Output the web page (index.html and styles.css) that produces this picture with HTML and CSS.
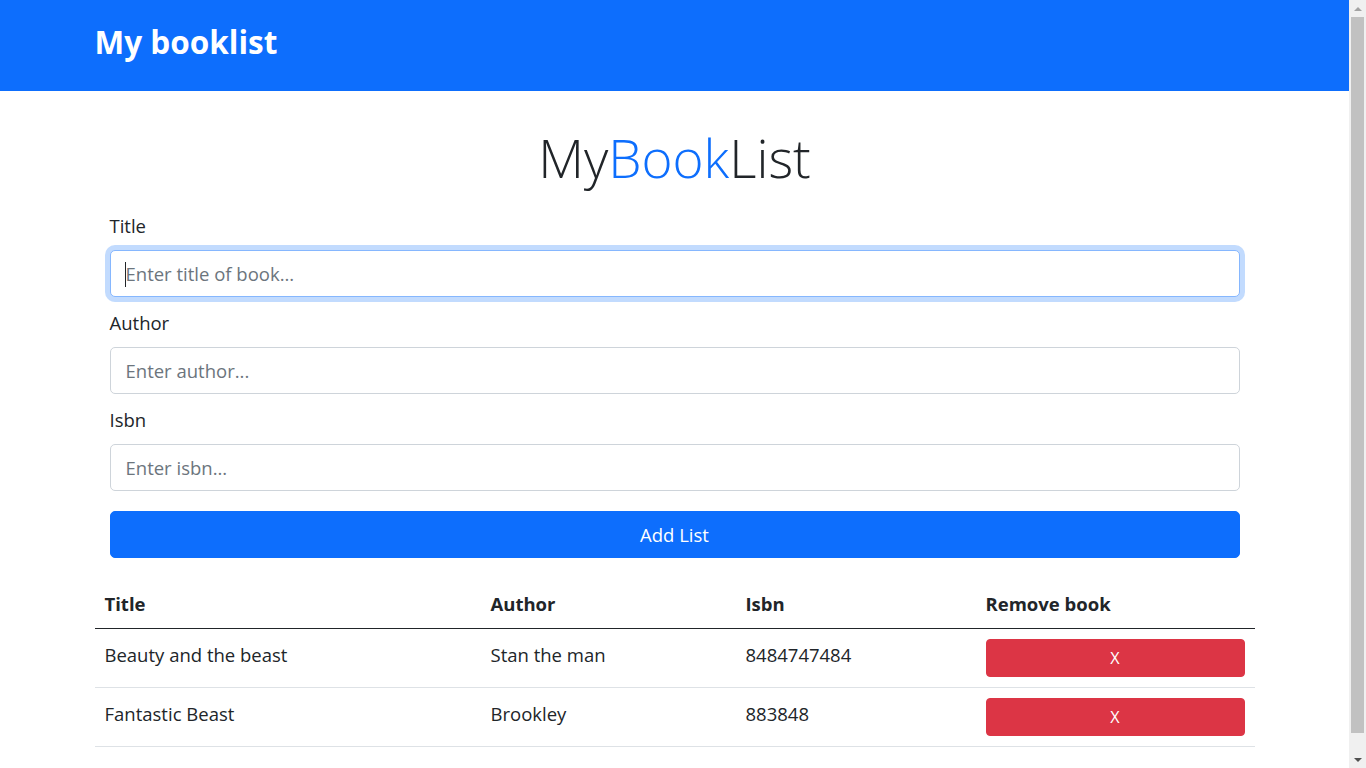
FILE: index.html
```html
<!DOCTYPE html>
<html lang="en">
<head>
<meta charset="utf-8">
<title>My booklist</title>
<link rel="stylesheet" href="styles.css">
</head>
<body>
<nav class="navbar">
  <div class="container">
    <span class="brand">My booklist</span>
  </div>
</nav>
<main class="container">
  <h1 class="display"><span>My</span><span class="accent">Book</span><span>List</span></h1>
  <form class="book-form">
    <div class="field">
      <label for="title">Title</label>
      <div class="input-wrap">
        <input id="title" class="input focused" type="text" placeholder="Enter title of book...">
        <span class="caret"></span>
      </div>
    </div>
    <div class="field">
      <label for="author">Author</label>
      <input id="author" class="input" type="text" placeholder="Enter author...">
    </div>
    <div class="field">
      <label for="isbn">Isbn</label>
      <input id="isbn" class="input" type="text" placeholder="Enter isbn...">
    </div>
    <button type="button" class="btn btn-primary">Add List</button>
  </form>
  <table class="book-table">
    <colgroup>
      <col class="col-title">
      <col class="col-author">
      <col class="col-isbn">
      <col class="col-remove">
    </colgroup>
    <thead>
      <tr><th>Title</th><th>Author</th><th>Isbn</th><th>Remove book</th></tr>
    </thead>
    <tbody>
      <tr>
        <td>Beauty and the beast</td>
        <td>Stan the man</td>
        <td>8484747484</td>
        <td class="actions"><button type="button" class="btn btn-danger">X</button></td>
      </tr>
      <tr>
        <td>Fantastic Beast</td>
        <td>Brookley</td>
        <td>883848</td>
        <td class="actions"><button type="button" class="btn btn-danger">X</button></td>
      </tr>
    </tbody>
  </table>
</main>
<div class="scrollbar" aria-hidden="true">
  <div class="sb-btn"><span class="arrow-up"></span></div>
  <div class="sb-track"><div class="sb-thumb"></div></div>
  <div class="sb-btn"><span class="arrow-down"></span></div>
</div>
</body>
</html>
```

FILE: styles.css
```css
body {
  margin: 0 17px 0 0;
  font-family: "Open Sans", "Noto Sans", sans-serif;
  font-size: 18.5px;
  line-height: 30px;
  color: #212529;
  background: #fff;
}

.container {
  width: 1160px;
  margin: 0 auto;
}

.navbar {
  background: #0d6efd;
  height: 91px;
  display: flex;
  align-items: center;
}
.brand {
  display: block;
  color: #fff;
  font-weight: 700;
  font-size: 31.5px;
  line-height: 40px;
  margin-top: -8px;
}

.display {
  margin: 35px 0 21px;
  text-align: center;
  font-weight: 300;
  font-size: 53px;
  line-height: 64px;
  color: #212529;
}
.display .accent {
  color: #0d6efd;
}

.book-form {
  padding: 0 15px;
  display: flex;
  flex-direction: column;
  gap: 11px;
}
.field label {
  display: block;
  margin-bottom: 9px;
}
.input-wrap {
  position: relative;
}
.input {
  display: block;
  box-sizing: border-box;
  width: 100%;
  height: 47px;
  padding: 0 15px 1px;
  font-family: inherit;
  font-size: 18.5px;
  color: #212529;
  background: #fff;
  border: 1px solid #ced4da;
  border-radius: 5px;
  outline: none;
}
.input::placeholder {
  color: #6c757d;
}
.input.focused {
  border-color: #86b7fe;
  box-shadow: 0 0 0 5px rgba(13, 110, 253, 0.25);
}
.caret {
  position: absolute;
  left: 15px;
  top: 12px;
  width: 1px;
  height: 25px;
  background: #212529;
}

.btn {
  display: block;
  box-sizing: border-box;
  width: 100%;
  font-family: inherit;
  color: #fff;
  border: 1px solid transparent;
  cursor: pointer;
}
.btn-primary {
  margin-top: 9px;
  height: 47px;
  font-size: 18.5px;
  background: #0d6efd;
  border-color: #0d6efd;
  border-radius: 5px;
}
.btn-danger {
  height: 38px;
  font-size: 16.2px;
  background: #dc3545;
  border-color: #dc3545;
  border-radius: 4px;
}

.book-table {
  width: 100%;
  margin: 20px 0 40px;
  border-collapse: collapse;
  table-layout: fixed;
}
.col-title { width: 386px; }
.col-author { width: 255px; }
.col-isbn { width: 240px; }
.col-remove { width: 279px; }
.book-table th,
.book-table td {
  padding: 11px 10px 9px;
  text-align: left;
  vertical-align: top;
}
.book-table td.actions {
  padding: 10px;
}
.book-table th {
  font-weight: 700;
  border-bottom: 1px solid #212529;
}
.book-table td {
  border-bottom: 1px solid #dee2e6;
}

.scrollbar {
  position: fixed;
  top: 0;
  right: 0;
  bottom: 0;
  width: 17px;
  background: #f0f0f0;
  display: flex;
  flex-direction: column;
}
.sb-btn {
  height: 17px;
  display: flex;
  align-items: center;
  justify-content: center;
}
.arrow-up {
  width: 0;
  height: 0;
  border-left: 4px solid transparent;
  border-right: 4px solid transparent;
  border-bottom: 4px solid #a3a3a3;
}
.arrow-down {
  width: 0;
  height: 0;
  border-left: 4px solid transparent;
  border-right: 4px solid transparent;
  border-top: 4px solid #505050;
}
.sb-track {
  flex: 1;
  padding: 0 2px 18px;
  display: flex;
}
.sb-thumb {
  flex: 1;
  background: #c1c1c1;
}
```
